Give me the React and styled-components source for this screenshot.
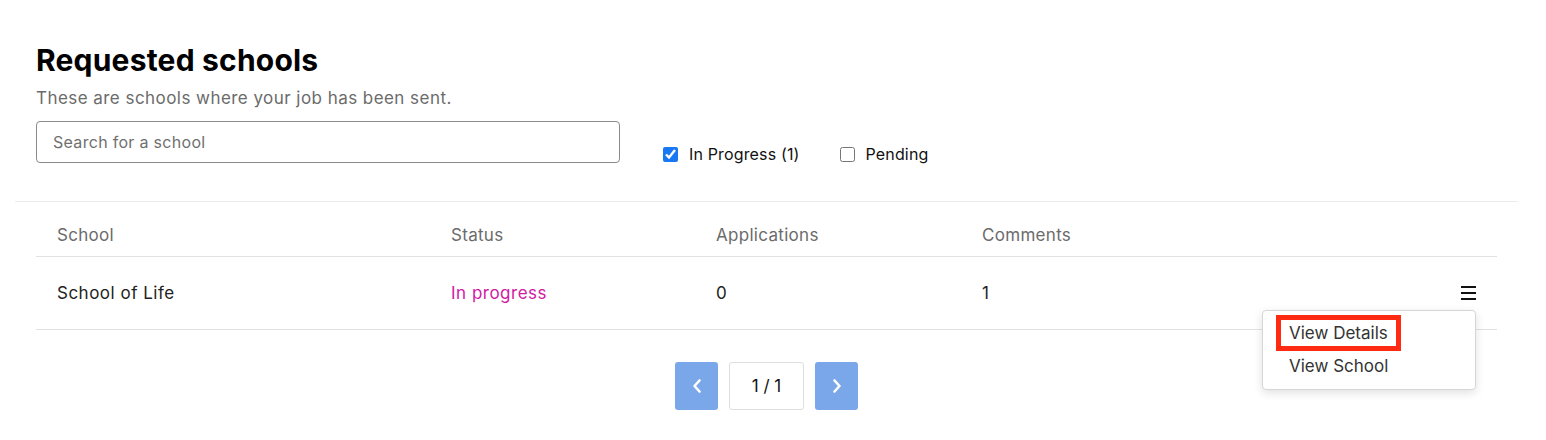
import React from 'react'
import styled, { createGlobalStyle } from 'styled-components'

const GlobalStyle = createGlobalStyle`
  html, body {
    margin: 0;
    padding: 0;
    background: #fff;
    font-family: Inter, "Liberation Sans", Arial, sans-serif;
    color: #222;
  }
  * { box-sizing: border-box; }
`

const Page = styled.div`
  width: 1546px;
  height: 440px;
  padding: 0 28px 0 15px;
  overflow: hidden;
`

const Header = styled.div`
  padding: 37px 21px 0;
  border-bottom: 1px solid #ececec;
  height: 202px;
`

const Title = styled.h1`
  margin: 0;
  font-size: 30px;
  font-weight: 700;
  line-height: 46px;
  color: #000;
  letter-spacing: 0.2px;
`

const Subtitle = styled.p`
  margin: 3px 0 0;
  font-size: 17px;
  line-height: 24px;
  color: #6b6b6b;
  letter-spacing: 0.45px;
`

const FilterRow = styled.div`
  display: flex;
  align-items: flex-start;
  margin-top: 11px;
`

const SearchInput = styled.input`
  width: 584px;
  height: 42px;
  border: 1px solid #8a8a8a;
  border-radius: 4px;
  padding: 0 16px;
  font-family: inherit;
  font-size: 16px;
  letter-spacing: 0.3px;
  color: #222;
  outline: none;

  &::placeholder {
    color: #707070;
  }
`

const Checks = styled.div`
  display: flex;
  align-items: center;
  gap: 40px;
  margin-left: 43px;
  margin-top: 23px;
`

const CheckLabel = styled.label`
  display: flex;
  align-items: center;
  gap: 11px;
  font-size: 16px;
  letter-spacing: 0.15px;
  color: #111;

  input {
    width: 15px;
    height: 15px;
    margin: 0;
    accent-color: #1877f2;
  }
`

const Table = styled.div`
  margin: 11px 21px 0;
`

const Row = styled.div`
  display: grid;
  grid-template-columns: 394px 265px 266px 1fr 60px;
  align-items: center;
  height: ${p => (p.$head ? '44px' : '73px')};
  border-bottom: 1px solid #e2e2e2;
  padding-left: 21px;
  font-size: 17px;
  letter-spacing: ${p => (p.$head ? '0.3px' : '0.5px')};
  color: ${p => (p.$head ? '#6b6b6b' : '#222')};
`

const Status = styled.span`
  color: #d01aa3;
`

const MenuCell = styled.div`
  position: relative;
  height: 100%;
  display: flex;
  align-items: center;
  justify-content: flex-end;
  padding-right: 21px;
`

const MenuButton = styled.button`
  border: 0;
  background: none;
  padding: 0;
  width: 15px;
  height: 14px;
  display: flex;
  flex-direction: column;
  justify-content: space-between;
  cursor: pointer;

  span {
    display: block;
    height: 1.6px;
    background: #111;
  }
`

const Menu = styled.div`
  position: absolute;
  top: 53px;
  right: 21px;
  width: 214px;
  height: 80px;
  background: #fff;
  border: 1px solid #d6d6d6;
  border-radius: 4px;
  box-shadow: 0 3px 10px rgba(0, 0, 0, 0.12);
  padding: 4px 0 0 13px;
  z-index: 2;
  letter-spacing: 0;
`

const MenuItem = styled.div`
  display: inline-flex;
  align-items: center;
  height: 36px;
  padding: 0 ${p => (p.$highlight ? '8px' : '13px')};
  font-size: 17px;
  color: #333;
  border: ${p => (p.$highlight ? '5px solid #ff2a12' : '0')};
  margin-top: ${p => (p.$highlight ? '0' : '-3px')};
  white-space: nowrap;
`

const Pagination = styled.div`
  display: flex;
  justify-content: center;
  align-items: center;
  gap: 11px;
  margin-top: 32px;
`

const PageButton = styled.button`
  width: 43px;
  height: 48px;
  border: 0;
  border-radius: 3px;
  background: #7aa7ea;
  color: #fff;
  display: flex;
  align-items: center;
  justify-content: center;
  padding: 0;
`

const PageBox = styled.div`
  width: 75px;
  height: 48px;
  border: 1px solid #dedede;
  border-radius: 3px;
  display: flex;
  align-items: center;
  justify-content: center;
  font-size: 17px;
  color: #111;
`

const Chevron = ({ dir }) => (
  <svg width="12" height="16" viewBox="0 0 12 16" fill="none">
    <path
      d={dir === 'left' ? 'M8.5 2.5 L3.5 8 L8.5 13.5' : 'M3.5 2.5 L8.5 8 L3.5 13.5'}
      stroke="#fff"
      strokeWidth="2.6"
      strokeLinecap="round"
      strokeLinejoin="round"
    />
  </svg>
)

export default function App() {
  return (
    <>
      <GlobalStyle />
      <Page>
        <Header>
          <Title>Requested schools</Title>
          <Subtitle>These are schools where your job has been sent.</Subtitle>
          <FilterRow>
            <SearchInput placeholder="Search for a school" />
            <Checks>
              <CheckLabel>
                <input type="checkbox" defaultChecked />
                In Progress (1)
              </CheckLabel>
              <CheckLabel>
                <input type="checkbox" />
                Pending
              </CheckLabel>
            </Checks>
          </FilterRow>
        </Header>

        <Table>
          <Row $head>
            <span>School</span>
            <span>Status</span>
            <span>Applications</span>
            <span>Comments</span>
            <span />
          </Row>
          <Row>
            <span>School of Life</span>
            <Status>In progress</Status>
            <span>0</span>
            <span>1</span>
            <MenuCell>
              <MenuButton aria-label="menu">
                <span />
                <span />
                <span />
              </MenuButton>
              <Menu>
                <MenuItem $highlight>View Details</MenuItem>
                <MenuItem>View School</MenuItem>
              </Menu>
            </MenuCell>
          </Row>
        </Table>

        <Pagination>
          <PageButton aria-label="previous"><Chevron dir="left" /></PageButton>
          <PageBox>1 / 1</PageBox>
          <PageButton aria-label="next"><Chevron dir="right" /></PageButton>
        </Pagination>
      </Page>
    </>
  )
}
